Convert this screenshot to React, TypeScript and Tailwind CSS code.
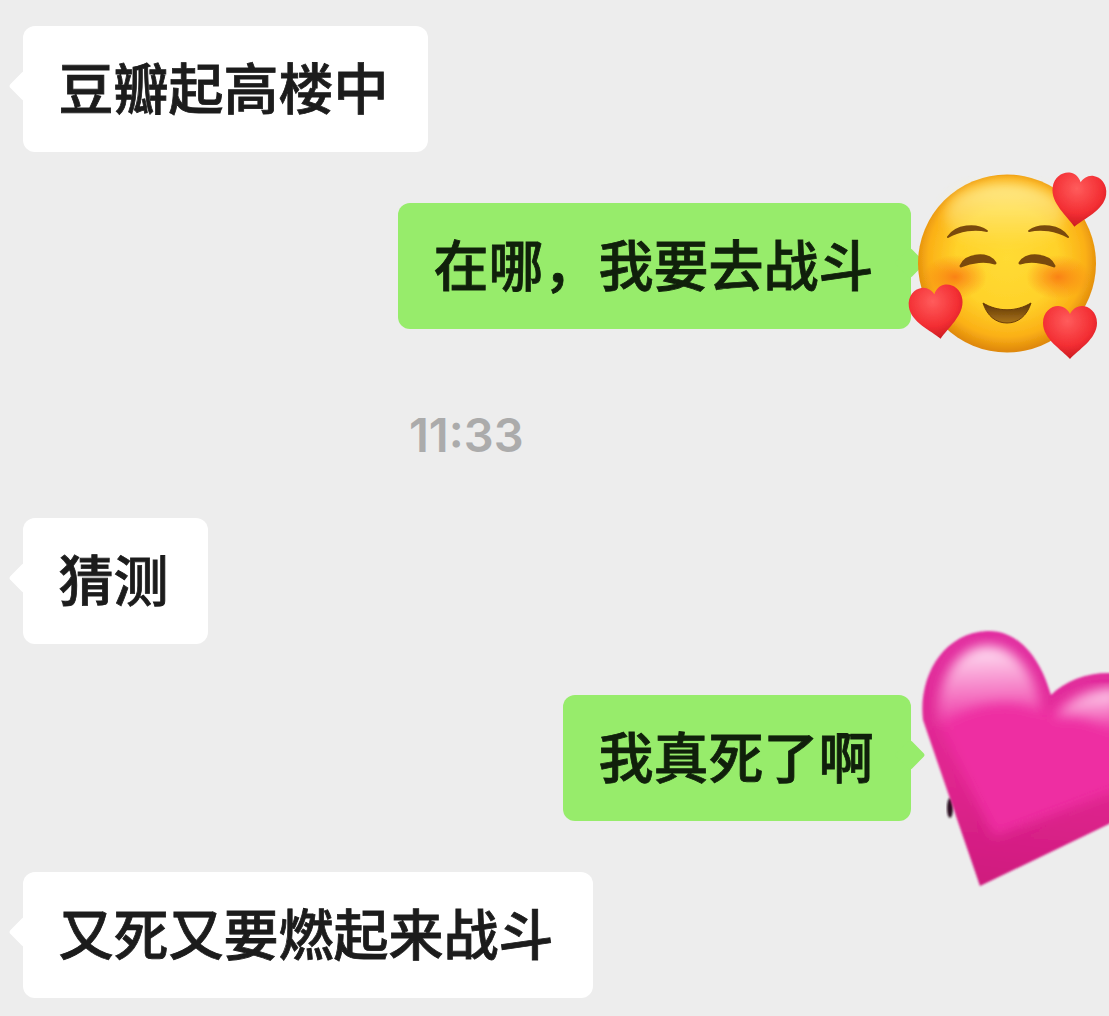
import React from 'react';

const FaceEmoji = () => {
  const heart = 'M0 26 C-8 17 -27 6 -27 -10 C-27 -21 -19 -27 -12 -27 C-6 -27 -2 -23 0 -19 C2 -23 6 -27 12 -27 C19 -27 27 -21 27 -10 C27 6 8 17 0 26 Z';
  return (
    <svg viewBox="0 0 219 210" className="absolute left-[890px] top-[160px] h-[210px] w-[219px]">
      <defs>
        <radialGradient id="face" cx="50%" cy="47%" r="52%">
          <stop offset="0%" stopColor="#ffdb34" />
          <stop offset="55%" stopColor="#ffd22a" />
          <stop offset="85%" stopColor="#fbb016" />
          <stop offset="100%" stopColor="#e08a0c" />
        </radialGradient>
        <linearGradient id="shine" x1="0" y1="0" x2="0" y2="1">
          <stop offset="0%" stopColor="#fff3a0" stopOpacity="0.85" />
          <stop offset="100%" stopColor="#fff3a0" stopOpacity="0" />
        </linearGradient>
        <radialGradient id="blush">
          <stop offset="0%" stopColor="#f97410" stopOpacity="0.85" />
          <stop offset="100%" stopColor="#f97410" stopOpacity="0" />
        </radialGradient>
        <radialGradient id="redHeart" cx="45%" cy="28%" r="78%">
          <stop offset="0%" stopColor="#ff5c5c" />
          <stop offset="60%" stopColor="#f32e33" />
          <stop offset="100%" stopColor="#c2171d" />
        </radialGradient>
        <linearGradient id="mouth" x1="0" y1="0" x2="0" y2="1">
          <stop offset="0%" stopColor="#5e3505" />
          <stop offset="100%" stopColor="#a8731a" />
        </linearGradient>
        <filter id="faceSoft">
          <feGaussianBlur stdDeviation="0.7" />
        </filter>
        <filter id="shineSoft">
          <feGaussianBlur stdDeviation="6" />
        </filter>
      </defs>
      <g filter="url(#faceSoft)">
        <circle cx="117" cy="103.5" r="89" fill="url(#face)" />
        <ellipse cx="115" cy="55" rx="60" ry="32" fill="url(#shine)" filter="url(#shineSoft)" />
        <ellipse cx="65" cy="117" rx="32" ry="22" fill="url(#blush)" />
        <ellipse cx="168" cy="117" rx="32" ry="22" fill="url(#blush)" />
        {/* eyebrows */}
        <path d="M58 77 C66 65 86 63 97 71 C85 68 70 70 58 77 Z" fill="#7a4a08" stroke="#7a4a08" strokeWidth="2" strokeLinejoin="round" />
        <path d="M178 77 C170 65 150 63 139 71 C151 68 166 70 178 77 Z" fill="#7a4a08" stroke="#7a4a08" strokeWidth="2" strokeLinejoin="round" />
        {/* eyes */}
        <path d="M71 106 C76 94 98 92 105 103 C96 100 82 101 71 106 Z" fill="#7a4a08" stroke="#7a4a08" strokeWidth="3" strokeLinejoin="round" />
        <path d="M164 106 C159 94 137 92 130 103 C139 100 153 101 164 106 Z" fill="#7a4a08" stroke="#7a4a08" strokeWidth="3" strokeLinejoin="round" />
        <path d="M93 143 C108 152 126 152 141 143 C137 156 128 163 117 163 C106 163 97 156 93 143 Z" fill="url(#mouth)" stroke="#6b3c06" strokeWidth="1" strokeLinejoin="round" />
        <path d={heart} fill="url(#redHeart)" transform="translate(188 41) rotate(8)" />
        <path d={heart} fill="url(#redHeart)" transform="translate(47 153) rotate(-8)" />
        <path d={heart} fill="url(#redHeart)" transform="translate(180 173)" />
      </g>
    </svg>
  );
};

const PinkHeart = () => (
  <svg viewBox="0 0 219 290" className="absolute left-[890px] top-[610px] h-[290px] w-[219px]">
    <defs>
      <linearGradient id="pinkRim" x1="0.5" y1="0" x2="0.4" y2="1">
        <stop offset="0%" stopColor="#e230a2" />
        <stop offset="60%" stopColor="#e0268f" />
        <stop offset="100%" stopColor="#cf1a7e" />
      </linearGradient>
      <linearGradient id="pinkShine" x1="0.45" y1="0" x2="0.5" y2="1">
        <stop offset="0%" stopColor="#ffe4f4" />
        <stop offset="100%" stopColor="#ffd9ef" stopOpacity="0" />
      </linearGradient>
      <filter id="edgeSoft">
        <feGaussianBlur stdDeviation="0.9" />
      </filter>
      <filter id="soft">
        <feGaussianBlur stdDeviation="6" />
      </filter>
      <clipPath id="heartClip">
        <path d="M90 276 L33 110 C28 68 52 23 97 21 C130 20 151 50 161 85 C175 71 196 63 218 63 C250 63 290 100 290 150 L219 214 Z" />
      </clipPath>
    </defs>
    <ellipse cx="60" cy="198" rx="3" ry="10" fill="#2a1020" filter="url(#edgeSoft)" />
    <g filter="url(#edgeSoft)">
      <path d="M90 276 L33 110 C28 68 52 23 97 21 C130 20 151 50 161 85 C175 71 196 63 218 63 C250 63 290 100 290 150 L219 214 Z" fill="url(#pinkRim)" />
      <g clipPath="url(#heartClip)">
        <path d="M104 226 L50 115 C44 78 66 40 97 38 C126 38 146 64 156 104 C172 88 195 80 240 80 L240 175 Z" fill="#ee2ea2" filter="url(#soft)" />
        <path d="M46 118 C46 62 72 36 98 36 C124 36 146 62 152 102 C122 86 82 90 46 118 Z" fill="url(#pinkShine)" filter="url(#soft)" />
        <path d="M164 108 C178 88 198 80 228 78 L228 124 C200 108 184 104 164 108 Z" fill="url(#pinkShine)" filter="url(#soft)" />
      </g>
    </g>
  </svg>
);

const Bubble = ({ text, mine }: { text: string; mine?: boolean }) => (
  <div
    className={`relative h-[126px] rounded-[12px] pl-[35.5px] text-[55px] font-medium leading-[118px] whitespace-nowrap [-webkit-text-stroke:0.8px_currentColor] ${
      mine ? 'bg-[#97ec6b] pr-[37.5px] text-[#10200b]' : 'bg-white pr-[39px] text-[#1c1c1c]'
    }`}
  >
    <span
      className={`absolute top-[49px] h-[22px] w-[22px] rotate-45 rounded-[3px] ${
        mine ? 'right-[-10px] bg-[#97ec6b]' : 'left-[-10px] bg-white'
      }`}
    />
    <span className="relative">{text}</span>
  </div>
);

export default function App() {
  return (
    <div
      className="relative h-[1016px] w-[1109px] overflow-hidden bg-[#ededed]"
      style={{ fontFamily: '"Noto Sans CJK SC", "Noto Sans", sans-serif' }}
    >
      <div className="flex flex-col pl-[23px] pr-[198px] pt-[26px]">
        <div className="self-start">
          <Bubble text="豆瓣起高楼中" />
        </div>
        <div className="mt-[51px] self-end">
          <Bubble text="在哪，我要去战斗" mine />
        </div>
        <div className="mt-[80px] mb-[57px] pl-[386px] font-['Inter'] text-[47px] font-semibold leading-[52px] text-[#ababab]">
          11:33
        </div>
        <div className="self-start">
          <Bubble text="猜测" />
        </div>
        <div className="mt-[51px] self-end">
          <Bubble text="我真死了啊" mine />
        </div>
        <div className="mt-[51px] self-start">
          <Bubble text="又死又要燃起来战斗" />
        </div>
      </div>
      <FaceEmoji />
      <PinkHeart />
    </div>
  );
}
